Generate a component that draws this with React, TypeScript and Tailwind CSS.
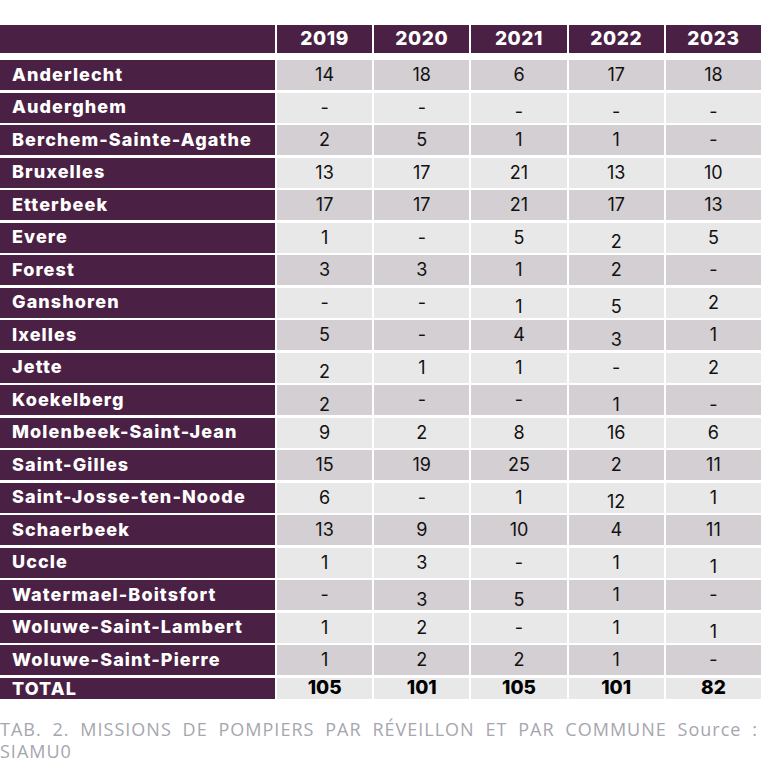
const years = ["2019", "2020", "2021", "2022", "2023"];

// l = cell drawn a little lower, as in the source table
type Cell = string | [string, "l"];

const rows: { name: string; values: Cell[] }[] = [
  { name: "Anderlecht", values: ["14", "18", "6", "17", "18"] },
  { name: "Auderghem", values: ["-", "-", ["-", "l"], ["-", "l"], ["-", "l"]] },
  { name: "Berchem-Sainte-Agathe", values: ["2", "5", "1", "1", "-"] },
  { name: "Bruxelles", values: ["13", "17", "21", "13", "10"] },
  { name: "Etterbeek", values: ["17", "17", "21", "17", "13"] },
  { name: "Evere", values: ["1", "-", "5", ["2", "l"], "5"] },
  { name: "Forest", values: ["3", "3", "1", "2", "-"] },
  { name: "Ganshoren", values: ["-", "-", ["1", "l"], ["5", "l"], "2"] },
  { name: "Ixelles", values: ["5", "-", "4", ["3", "l"], "1"] },
  { name: "Jette", values: [["2", "l"], "1", "1", "-", "2"] },
  { name: "Koekelberg", values: [["2", "l"], "-", "-", ["1", "l"], ["-", "l"]] },
  { name: "Molenbeek-Saint-Jean", values: ["9", "2", "8", "16", "6"] },
  { name: "Saint-Gilles", values: ["15", "19", "25", "2", "11"] },
  { name: "Saint-Josse-ten-Noode", values: ["6", "-", "1", ["12", "l"], "1"] },
  { name: "Schaerbeek", values: ["13", "9", "10", "4", "11"] },
  { name: "Uccle", values: ["1", "3", "-", "1", ["1", "l"]] },
  { name: "Watermael-Boitsfort", values: ["-", ["3", "l"], ["5", "l"], "1", "-"] },
  { name: "Woluwe-Saint-Lambert", values: ["1", "2", "-", "1", ["1", "l"]] },
  { name: "Woluwe-Saint-Pierre", values: ["1", "2", "2", "1", "-"] },
];

const totals = ["105", "101", "105", "101", "82"];

const App = () => {
  return (
    <div className="w-[770px] h-[770px] bg-white pt-[25px] font-['Inter',sans-serif]">
      <div className="w-[761px] grid grid-cols-[275px_repeat(5,1fr)] gap-x-[2px]">
        {/* header */}
        <div className="h-[28px] bg-[#4a2144]" />
        {years.map((y) => (
          <div
            key={y}
            className="h-[28px] bg-[#4a2144] flex items-center justify-center text-white font-extrabold text-[19px] tracking-[0.6px]"
          >
            {y}
          </div>
        ))}
        <div className="col-span-6 h-[7px]" />

        {rows.map((row, i) => {
          const bg = i % 2 === 0 ? "bg-[#d3cfd2]" : "bg-[#e8e8e8]";
          return (
            <div key={row.name} className="contents">
              <div className="h-[30px] mb-[2.5px] bg-[#4a2144] flex items-center pl-3 pb-[2px] text-white font-extrabold text-[18px] tracking-[1.1px]">
                {row.name}
              </div>
              {row.values.map((v, j) => {
                const low = Array.isArray(v);
                const text = Array.isArray(v) ? v[0] : v;
                return (
                  <div
                    key={j}
                    className={`h-[30px] mb-[2.5px] ${bg} flex items-center justify-center text-[18px] text-[#111]`}
                  >
                    <span className={low ? "pt-[8px]" : "pb-[1px]"}>{text}</span>
                  </div>
                );
              })}
            </div>
          );
        })}

        <div className="h-[21px] bg-[#4a2144] flex items-center pl-3 text-white font-extrabold text-[18px] tracking-[1.1px]">
          TOTAL
        </div>
        {totals.map((t, j) => (
          <div
            key={j}
            className="h-[21px] bg-[#e8e8e8] flex items-center justify-center font-extrabold text-[19px] text-black"
          >
            {t}
          </div>
        ))}
      </div>

      <p className="w-[758px] mt-[19px] text-[18px] leading-[22px] text-[#a6a6ae] tracking-[1px] text-justify [text-align-last:left] font-['Open_Sans',sans-serif]">
        TAB. 2. MISSIONS DE POMPIERS PAR RÉVEILLON ET PAR COMMUNE Source : SIAMU0
      </p>
    </div>
  );
};

export default App;
